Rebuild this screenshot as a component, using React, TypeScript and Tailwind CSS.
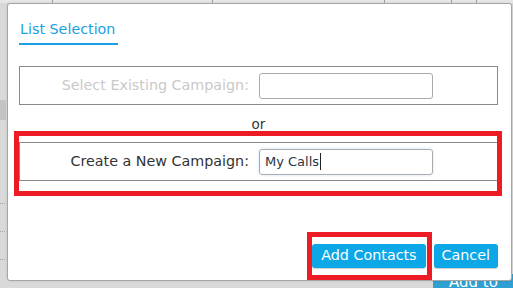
export default function App() {
  return (
    <div className="relative w-[513px] h-[288px] overflow-hidden bg-[#d9d9d9] font-['DejaVu_Sans',sans-serif]">
      {/* page behind the modal */}
      <div className="flex h-full flex-col">
        <div className="flex h-[3px] bg-[#e6e6e6]">
          <div className="w-[53px] border-r border-[#a0a0a0]" />
          <div className="w-[160px] border-r border-[#a0a0a0]" />
          <div className="w-[172px] border-r border-[#a0a0a0]" />
          <div className="w-[67px] border-r border-[#a0a0a0]" />
          <div className="w-[25px] border-r border-[#a0a0a0]" />
        </div>
        <div className="flex flex-1 flex-col pt-[97px]">
          <div className="h-[20px] w-[6px] bg-[#c4c4c4]" />
          <div className="mt-[83px] flex flex-col gap-[27px]">
            <div className="w-[5px] border-t border-dotted border-[#aaa]" />
            <div className="w-[5px] border-t border-dotted border-[#aaa]" />
            <div className="w-[5px] border-t border-dotted border-[#aaa]" />
          </div>
        </div>
        <div className="flex h-[14px] justify-end">
          <div className="h-[30px] w-[80px] bg-[#2fa0d2] pl-[16px] text-[15px] leading-[16px] text-white">Add to C</div>
        </div>
      </div>

      {/* modal */}
      <div className="absolute left-[7px] top-[3px] flex h-[278px] w-[505px] flex-col rounded-[3px] border border-[#a6a6a6] bg-white pl-[11px] pr-[13px] shadow-[0_0_2px_rgba(0,0,0,0.15)]">
        <div className="mt-[15px] flex">
          <div className="border-b-2 border-[#1ba1e2] pl-[1px] pr-[3px] pb-[4px] text-[14.3px] leading-[20px] text-[#1ba1e2]">
            List Selection
          </div>
        </div>

        <div className="mt-[21px] flex h-[39px] items-center border border-[#8a8a8a]">
          <div className="w-[229px] text-right text-[14.3px] text-[#c9c9c9]">Select Existing Campaign:</div>
          <div className="ml-[10px] h-[26px] w-[174px] rounded-[3px] border border-[#ababab]" />
        </div>

        <div className="mt-[11px] text-center text-[13.5px] leading-[16px] text-[#333]">or</div>

        <div className="mt-[10px] flex h-[39px] items-center border border-[#8a8a8a]">
          <div className="w-[229px] text-right text-[14.3px] text-[#333]">Create a New Campaign:</div>
          <div className="ml-[10px] flex h-[26px] w-[174px] items-center rounded-[3px] border border-[#ababab] pl-[5px] text-[13px] text-[#2b3440] shadow-[0_0_3px_rgba(120,170,220,0.35)]">
            My Calls<span className="ml-px h-[17px] w-px bg-[#222]" />
          </div>
        </div>

        <div className="mt-auto mb-[12px] flex justify-end gap-[8px]">
          <button className="h-[24px] rounded-[3px] bg-[#0ba7e6] px-[9px] text-[14.3px] text-white shadow-[0_1px_1px_rgba(0,0,0,0.2)]">
            Add Contacts
          </button>
          <button className="h-[24px] rounded-[3px] bg-[#0ba7e6] px-[8px] text-[14.3px] text-white shadow-[0_1px_1px_rgba(0,0,0,0.2)]">
            Cancel
          </button>
        </div>
      </div>

      {/* red highlight annotations */}
      <div className="absolute left-[14px] top-[131px] h-[65px] w-[488px] border-[5px] border-[#ed1c24]" />
      <div className="absolute left-[307px] top-[232px] h-[48px] w-[125px] border-[5px] border-[#ed1c24]" />
    </div>
  )
}
